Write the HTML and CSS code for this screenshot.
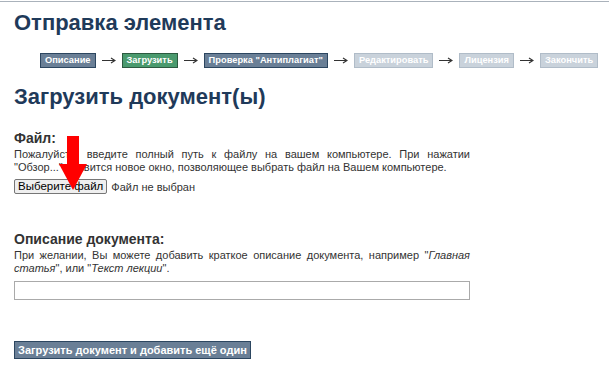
FILE: index.html
```html
<!DOCTYPE html>
<html>
<head>
  <title>Отправка элемента</title>
  <link rel="stylesheet" href="styles.css">
</head>
<body>
  <div class="topline"></div>
  <div class="page">
    <h1>Отправка элемента</h1>

    <div class="steps">
      <span class="step done">Описание</span>
      <svg class="arrow" width="14" height="7" viewBox="0 0 14 7"><path d="M0 3.5H12M9 1L13 3.5L9 6" fill="none" stroke="#333" stroke-width="1.2"/></svg>
      <span class="step current">Загрузить</span>
      <svg class="arrow" width="14" height="7" viewBox="0 0 14 7"><path d="M0 3.5H12M9 1L13 3.5L9 6" fill="none" stroke="#333" stroke-width="1.2"/></svg>
      <span class="step done">Проверка "Антиплагиат"</span>
      <svg class="arrow" width="14" height="7" viewBox="0 0 14 7"><path d="M0 3.5H12M9 1L13 3.5L9 6" fill="none" stroke="#333" stroke-width="1.2"/></svg>
      <span class="step todo">Редактировать</span>
      <svg class="arrow" width="14" height="7" viewBox="0 0 14 7"><path d="M0 3.5H12M9 1L13 3.5L9 6" fill="none" stroke="#333" stroke-width="1.2"/></svg>
      <span class="step todo">Лицензия</span>
      <svg class="arrow" width="14" height="7" viewBox="0 0 14 7"><path d="M0 3.5H12M9 1L13 3.5L9 6" fill="none" stroke="#333" stroke-width="1.2"/></svg>
      <span class="step todo">Закончить</span>
    </div>

    <h2>Загрузить документ(ы)</h2>

    <div class="field file-field">
      <h3>Файл:</h3>
      <p class="hint">Пожалуйста, введите полный путь к файлу на вашем компьютере. При нажатии "Обзор..." появится новое окно, позволяющее выбрать файл на Вашем компьютере.</p>
      <div class="file-input">
        <button class="file-button">Выберите файл</button>
        <span class="file-name">Файл не выбран</span>
      </div>
      <!-- red pointer drawn over the form -->
      <svg class="pointer" width="30" height="54" viewBox="0 0 30 54">
        <rect x="9" y="0" width="12" height="29" fill="#f00"/>
        <polygon points="1,28 29,28 15,54" fill="#f00"/>
      </svg>
    </div>

    <div class="field">
      <h3>Описание документа:</h3>
      <p class="hint">При желании, Вы можете добавить краткое описание документа, например "<i>Главная статья</i>", или "<i>Текст лекции</i>".</p>
      <input class="text-input" type="text">
    </div>

    <button class="submit">Загрузить документ и добавить ещё один</button>
  </div>
</body>
</html>
```

FILE: styles.css
```css
body {
  margin: 0;
  font-family: "Liberation Sans", Arial, sans-serif;
  color: #333;
  background-color: white;
}
.topline {
  margin-top: 1px;
  height: 1px;
  background-color: #aab2bb;
}
.page {
  width: 456px;
  padding: 0 14px;
}
h1, h2 {
  font-size: 22px;
  line-height: 26px;
  color: #1f3a5a;
  margin: 0;
}
h1 {
  margin-top: 8px;
}
h2 {
  margin-top: 16px;
}
h3 {
  font-size: 14px;
  line-height: 16px;
  margin: 0;
  color: #333;
}
.steps {
  display: flex;
  align-items: center;
  gap: 6px;
  margin: 17px 0 0 26px;
  white-space: nowrap;
}
.step {
  font-size: 9.3px;
  font-weight: bold;
  line-height: 13px;
  padding: 0 4px;
  border: 1px solid;
  color: white;
}
.step.done {
  background-color: #6a7f96;
  border-color: #2c4660;
}
.step.current {
  background-color: #4a9a6e;
  border-color: #2c5a40;
}
.step.todo {
  background-color: #c9d2db;
  border-color: #b0bcc8;
}
.arrow {
  flex: none;
}
.field {
  position: relative;
  margin-top: 20px;
}
.hint {
  font-size: 11px;
  line-height: 13px;
  text-align: justify;
  margin: 2px 0 0;
}
.file-input {
  display: flex;
  align-items: center;
  gap: 4px;
  margin-top: 5px;
  font-size: 11px;
}
.file-button {
  font-family: "Liberation Sans", Arial, sans-serif;
  font-size: 11.5px;
  line-height: 11px;
  padding: 1px 3px;
  background-color: #efefef;
  border: 1px solid #767676;
  border-radius: 2px;
  color: black;
}
.file-field {
  margin-bottom: 37px;
}
.pointer {
  position: absolute;
  left: 44px;
  top: 6px;
}
.text-input {
  display: block;
  box-sizing: border-box;
  width: 456px;
  height: 19px;
  margin-top: 6px;
  border: 1px solid #aaa;
}
.submit {
  margin-top: 41px;
  font-family: "Liberation Sans", Arial, sans-serif;
  font-size: 11px;
  font-weight: bold;
  line-height: 14px;
  padding: 1px 3px;
  color: white;
  background-color: #6a7f96;
  border: 1px solid #2c4660;
}
```
